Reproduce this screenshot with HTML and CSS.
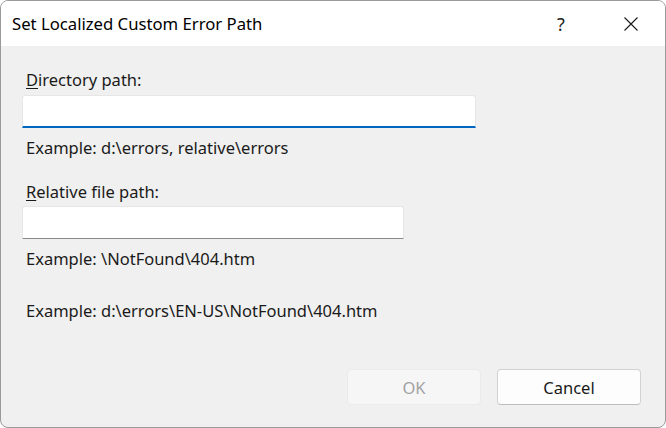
FILE: index.html
```html
<!DOCTYPE html>
<html>
<head>
<meta charset="utf-8">
<link rel="stylesheet" href="styles.css">
</head>
<body>
<div class="window">
  <div class="titlebar">
    <div class="title">Set Localized Custom Error Path</div>
    <div class="help">?</div>
    <div class="close">
      <svg width="14" height="14" viewBox="0 0 14 14"><path d="M0.5 0.5L13.5 13.5M13.5 0.5L0.5 13.5" stroke="#1a1a1a" stroke-width="1.1" fill="none"/></svg>
    </div>
  </div>
  <div class="content">
    <div class="label"><u>D</u>irectory path:</div>
    <div class="input input-focus"></div>
    <div class="example">Example: d:\errors, relative\errors</div>
    <div class="label label2"><u>R</u>elative file path:</div>
    <div class="input input-short"></div>
    <div class="example">Example: \NotFound\404.htm</div>
    <div class="example example3">Example: d:\errors\EN-US\NotFound\404.htm</div>
    <div class="buttons">
      <div class="btn btn-disabled">OK</div>
      <div class="btn btn-cancel">Cancel</div>
    </div>
  </div>
</div>
</body>
</html>
```
FILE: styles.css
```css
html, body {
  margin: 0;
  padding: 0;
  background: #ffffff;
}
body {
  width: 666px;
  height: 428px;
  overflow: hidden;
  font-family: "Noto Sans", "Open Sans", sans-serif;
  color: #1a1a1a;
}
.window {
  box-sizing: border-box;
  width: 666px;
  height: 428px;
  border: 1px solid #9a9a9a;
  border-radius: 8px;
  overflow: hidden;
  background: #f0f0f0;
  display: flex;
  flex-direction: column;
}
.titlebar {
  height: 45px;
  background: #ffffff;
  display: flex;
  align-items: center;
  flex-shrink: 0;
}
.title {
  flex: 1;
  padding-left: 11px;
  font-size: 16.7px;
  color: #000;
}
.help {
  width: 24px;
  text-align: center;
  font-size: 18px;
  margin-right: 51px;
  color: #222;
}
.close {
  width: 14px;
  height: 14px;
  margin-right: 27px;
}
.close svg { display: block; }
.content {
  flex: 1;
  display: flex;
  flex-direction: column;
  padding: 0 24px 0 21px;
  font-size: 16.5px;
}
.label {
  margin-top: 24px;
  padding-left: 4px;
  line-height: 20px;
  height: 20px;
}
.label u { text-decoration-thickness: 1px; text-underline-offset: 2px; }
.label2 { margin-top: 24px; }
.input {
  box-sizing: border-box;
  margin-top: 5px;
  height: 33px;
  background: #ffffff;
  border: 1px solid #e6e6e6;
  border-bottom: 1px solid #8a8a8a;
  border-radius: 3px 3px 0 0;
}
.input-focus {
  width: 454px;
  border-bottom: 2px solid #0067c0;
}
.input-short {
  width: 382px;
  margin-top: 4px;
}
.example {
  margin-top: 10px;
  padding-left: 4px;
  line-height: 20px;
  height: 20px;
}
.example3 { margin-top: 32px; }
.buttons {
  margin-top: auto;
  margin-bottom: 22px;
  display: flex;
  justify-content: flex-end;
  gap: 16px;
}
.btn {
  box-sizing: border-box;
  height: 36px;
  border-radius: 4px;
  display: flex;
  align-items: center;
  justify-content: center;
  font-size: 16.5px;
}
.btn-disabled {
  width: 134px;
  background: #f6f6f6;
  border: 1px solid #ebebeb;
  color: #a2a2a2;
}
.btn-cancel {
  width: 144px;
  background: #fdfdfd;
  border: 1px solid #d2d2d2;
  border-bottom-color: #bdbdbd;
  color: #1a1a1a;
}
```
